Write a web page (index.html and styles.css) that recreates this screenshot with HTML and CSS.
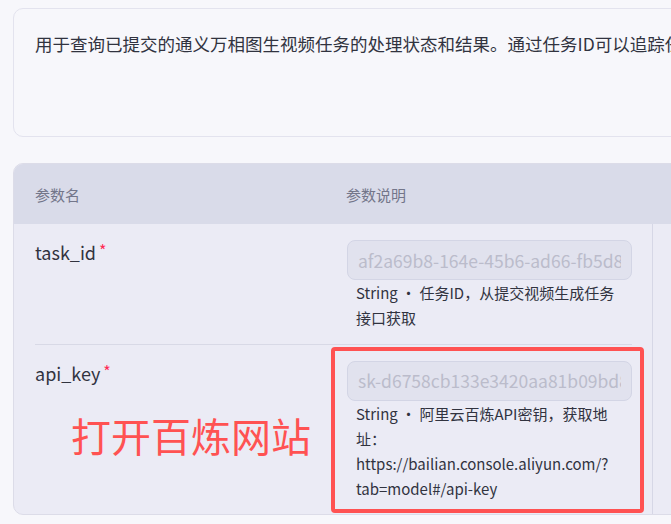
FILE: index.html
```html
<!DOCTYPE html>
<html lang="zh">
<head>
<meta charset="utf-8">
<link rel="stylesheet" href="styles.css">
</head>
<body>
<div class="page">
  <div class="intro">
    <p class="intro-text">用于查询已提交的通义万相图生视频任务的处理状态和结果。通过任务ID可以追踪任务的执行进度，获取生成的视频地址。</p>
  </div>

  <div class="table">
    <div class="thead">
      <div class="th th-name">参数名</div>
      <div class="th th-desc">参数说明</div>
    </div>
    <div class="tbody">
      <div class="main">
        <div class="row">
          <div class="name">task_id<span class="req">*</span></div>
          <div class="field">
            <input class="input" type="text" readonly value="af2a69b8-164e-45b6-ad66-fb5d8c2a7e31">
            <div class="desc">String ・ 任务ID，从提交视频生成任务接口获取</div>
          </div>
        </div>
        <div class="row row-last">
          <div class="name">api_key<span class="req">*</span></div>
          <div class="field">
            <input class="input" type="text" readonly value="sk-d6758cb133e3420aa81b09bd8e2f5a71">
            <div class="desc">String ・ 阿里云百炼API密钥，获取地址：https://bailian.console.aliyun.com/?tab=model#/api-key</div>
          </div>
          <div class="mark-box"></div>
          <div class="mark-label">打开百炼网站</div>
        </div>
      </div>
      <div class="side"></div>
    </div>
  </div>
</div>
</body>
</html>
```
FILE: styles.css
```css
html, body {
  margin: 0;
  padding: 0;
}
body {
  background: #f7f7fb;
  overflow: hidden;
  font-family: "Noto Sans CJK SC", "Noto Sans", sans-serif;
  color: #31333f;
}
.page {
  width: 1000px;
  padding: 8px 0 0 13px;
  display: flex;
  flex-direction: column;
  gap: 26px;
}
.intro {
  height: 127px;
  border: 1px solid #e3e3ee;
  border-radius: 10px;
  padding: 0 21px;
}
.intro-text {
  margin: 23px 0 0;
  font-size: 17.5px;
  line-height: 24px;
  white-space: nowrap;
  color: #31333f;
}
.table {
  border: 1px solid #dcdce8;
  border-radius: 10px;
  overflow: hidden;
  background: #ebebf5;
}
.thead {
  height: 60px;
  background: #d9dbe9;
  display: flex;
  align-items: center;
  padding-left: 21px;
}
.th {
  font-size: 15px;
  color: #73768a;
}
.th-name {
  width: 311px;
}
.tbody {
  display: flex;
}
.main {
  width: 597px;
  padding: 0 20px 0 21px;
  border-right: 1px solid #d6d7e6;
}
.side {
  flex: 1;
}
.row {
  position: relative;
  display: flex;
  border-bottom: 1px solid #d8d9e6;
  padding: 16px 0 13px;
}
.row-last {
  border-bottom: none;
  padding-bottom: 12px;
}
.name {
  width: 312px;
  font-size: 18px;
  line-height: 24px;
  color: #31333f;
}
.req {
  color: #ff2b55;
  font-size: 16px;
  margin-left: 3px;
  position: relative;
  top: -3px;
}
.field {
  width: 285px;
}
.input {
  display: block;
  box-sizing: border-box;
  width: 285px;
  height: 40px;
  margin: 0;
  padding: 0 10px;
  border: 1px solid #d3d5e5;
  border-radius: 8px;
  background: #e1e2ee;
  font-family: "Noto Sans CJK SC", "Noto Sans", sans-serif;
  font-size: 17.5px;
  color: #bbbccb;
  outline: none;
}
.desc {
  margin: 0 0 0 9px;
  width: 261px;
  font-size: 15px;
  line-height: 25.3px;
  color: #31333f;
}
.mark-box {
  position: absolute;
  left: 296px;
  top: 2px;
  width: 305px;
  height: 158px;
  border: 4px solid #ff5252;
  border-radius: 4px;
}
.mark-label {
  position: absolute;
  left: 36px;
  top: 68px;
  font-size: 40px;
  line-height: 44px;
  color: #ff5252;
  white-space: nowrap;
}
```
